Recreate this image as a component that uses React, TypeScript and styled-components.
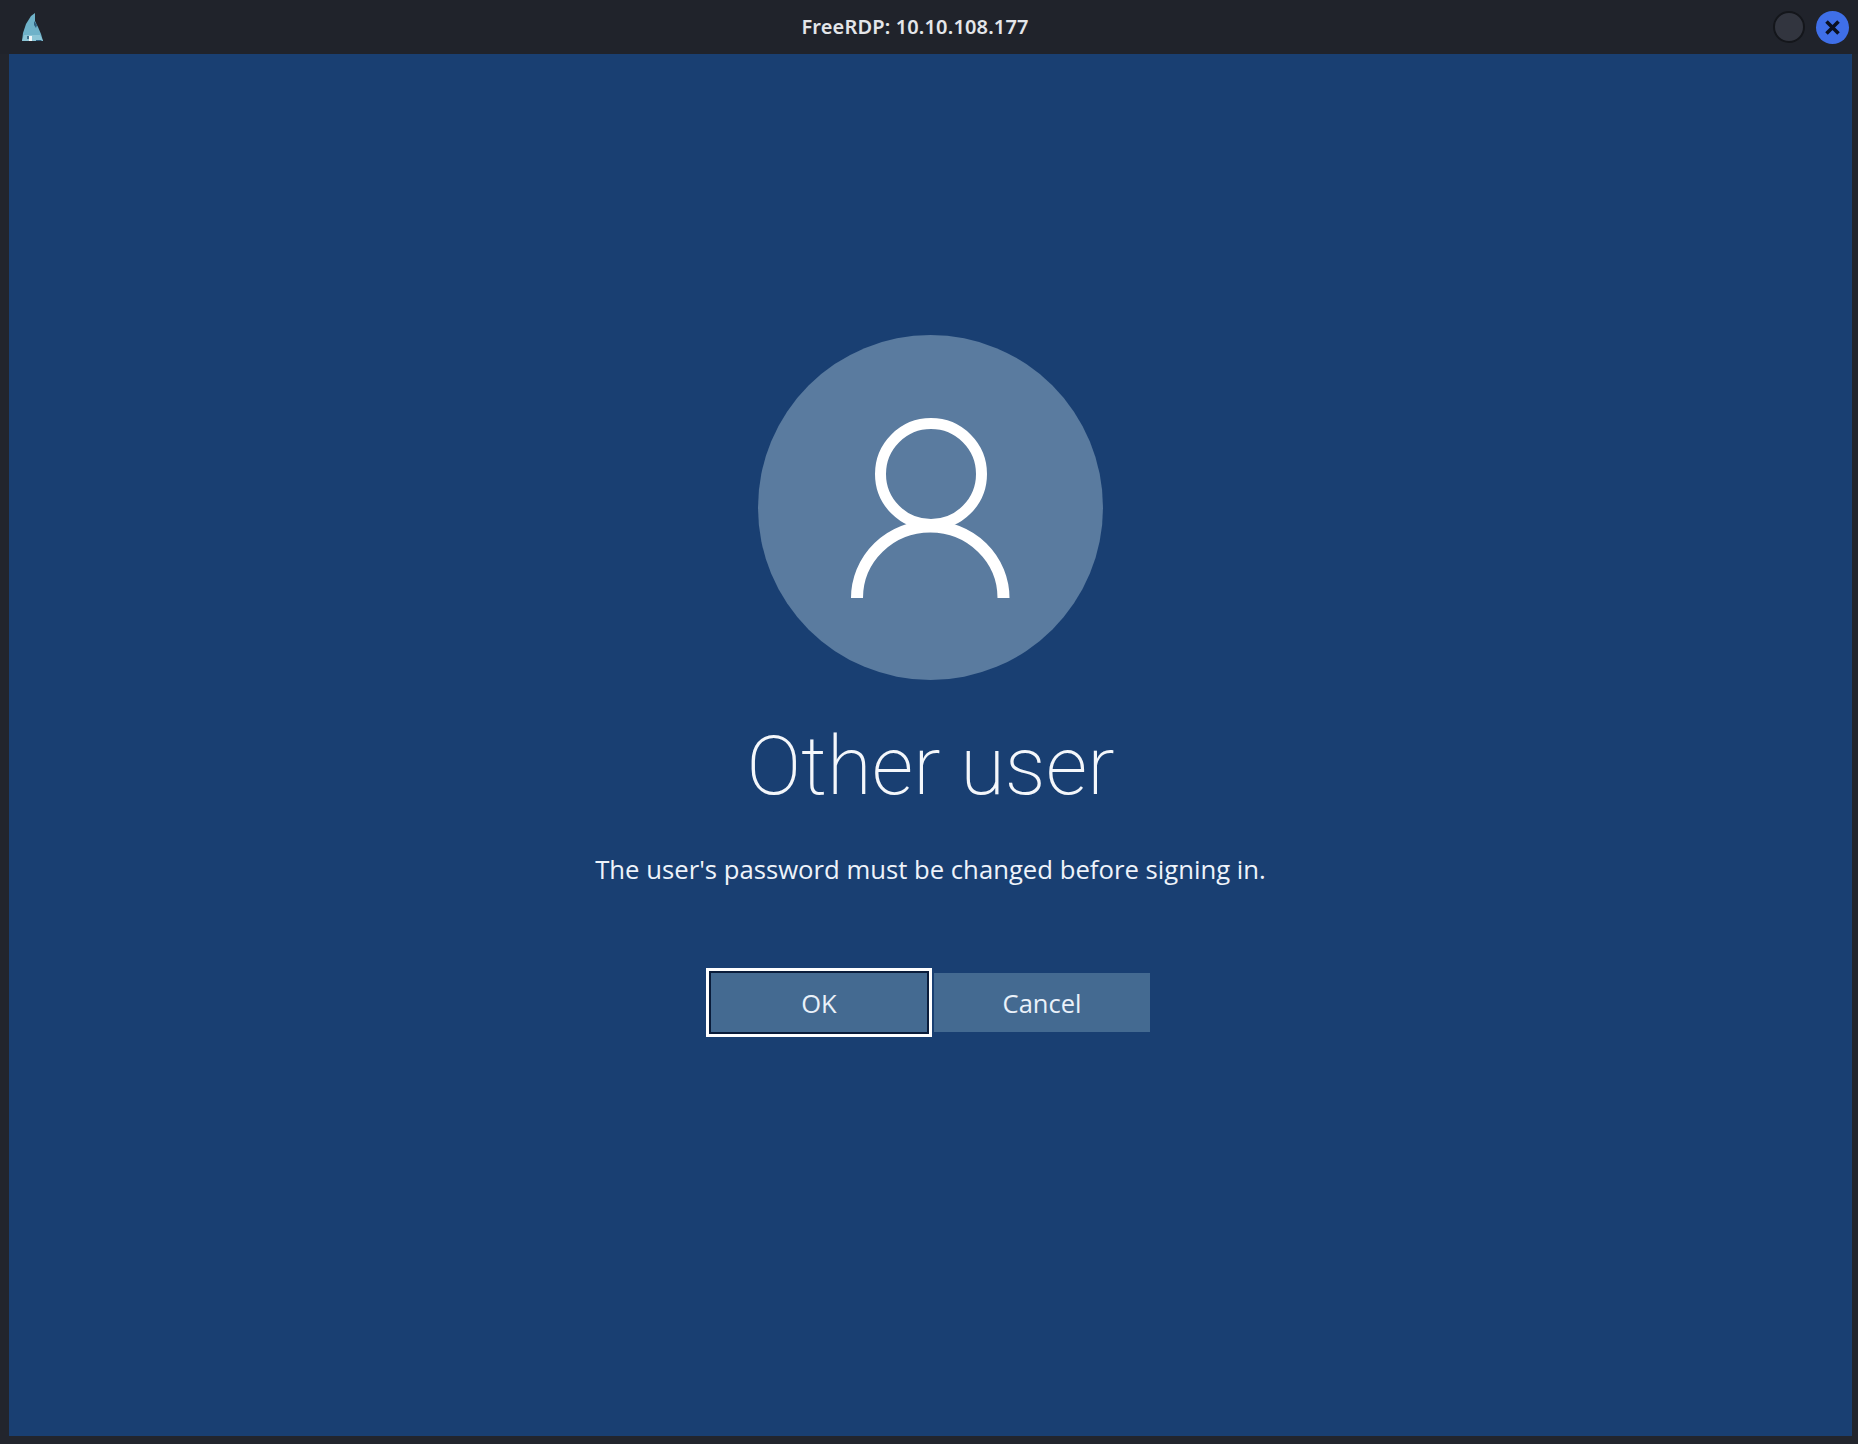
import React from 'react';
import styled, { createGlobalStyle } from 'styled-components';

const GlobalStyle = createGlobalStyle`
  html, body {
    margin: 0;
    padding: 0;
    background: #22252d;
  }
`

const Window = styled.div`
  width: 1858px;
  height: 1444px;
  display: flex;
  flex-direction: column;
  background: #22252d;
  font-family: "Open Sans", "Noto Sans", sans-serif;
  overflow: hidden;
`

const TitleBar = styled.div`
  height: 54px;
  flex: none;
  display: flex;
  align-items: center;
  justify-content: space-between;
  background: #20232b;
`

const AppIconSlot = styled.div`
  width: 35px;
  padding-left: 22px;
  display: flex;
  align-items: center;
`

const Title = styled.span`
  margin-bottom: 2px;
  font-family: "Noto Sans", sans-serif;
  font-size: 20px;
  letter-spacing: 0.15px;
  font-weight: 600;
  color: #e4e6ea;
  white-space: nowrap;
`

const WindowButtons = styled.div`
  width: 76px;
  padding-right: 9px;
  display: flex;
  align-items: center;
  gap: 11px;
`

const MinimizeButton = styled.div`
  width: 32px;
  height: 32px;
  box-sizing: border-box;
  border-radius: 50%;
  border: 2px solid #14161b;
  background: #32353f;
`

const CloseButton = styled.div`
  width: 33px;
  height: 33px;
  border-radius: 50%;
  background: #3f6fe8;
  display: flex;
  align-items: center;
  justify-content: center;
`

const Desktop = styled.div`
  flex: 1;
  margin: 0 6px 8px 9px;
  padding-top: 281px;
  display: flex;
  flex-direction: column;
  align-items: center;
  background: #193f72;
  color: #fff;
`

const Avatar = styled.div`
  width: 345px;
  height: 345px;
  flex: none;
  border-radius: 50%;
  background: #5a7b9f;
`

const UserName = styled.h1`
  margin: 30px 0 0;
  font-family: Roboto, "Open Sans", sans-serif;
  font-size: 81.5px;
  line-height: 112px;
  font-weight: 200;
  color: #f4f7fb;
`

const Message = styled.p`
  margin: 31px 0 0;
  font-size: 25.7px;
  line-height: 34px;
  color: #eef3fa;
`

const ButtonRow = styled.div`
  margin-top: 86px;
  display: flex;
  gap: 7px;
`

const ActionButton = styled.button<{ $focused?: boolean }>`
  width: 216px;
  height: 59px;
  padding: 0;
  border: none;
  background: #446a91;
  color: #eaf1f9;
  font-family: "Open Sans", "Noto Sans", sans-serif;
  font-size: 25.5px;
  ${p => p.$focused && `
    box-shadow: 0 0 0 2px #0a1c3a, 0 0 0 5px #fff;
  `}
`

function FreeRdpIcon() {
  return (
    <svg width="22" height="29" viewBox="0 0 22 29">
      <path d="M0 28 L1 20 L4 11 L9 3 L13 0 L13 8 L16 14 L19 21 L21 28 Z" fill="#6fb2c9" />
      <path d="M12 8 L15 12 L14 15 L12 12 Z" fill="#2f5f7e" />
      <path d="M2 22 L18 22 L21 28 L0 28 Z" fill="#8cc5d6" />
      <path d="M14 27 L19 27 L20 28 L14 28 Z" fill="#2f5f7e" />
      <rect x="7" y="23" width="3" height="5" fill="#f2f6f8" />
      <rect x="5" y="23" width="2" height="3" fill="#3f6f8a" />
    </svg>
  )
}

function CloseIcon() {
  return (
    <svg width="17" height="17" viewBox="0 0 17 17">
      <path d="M2.5 2.5 L14.5 14.5 M14.5 2.5 L2.5 14.5" stroke="#0b1020" strokeWidth="3.6" />
    </svg>
  )
}

function UserIcon() {
  return (
    <svg width="345" height="345" viewBox="0 0 345 345">
      <circle cx="173" cy="139" r="50.5" fill="none" stroke="#fff" strokeWidth="11" />
      <path d="M99 263 A73.25 71.5 0 0 1 245.5 263" fill="none" stroke="#fff" strokeWidth="12" />
    </svg>
  )
}

export default function App() {
  return (
    <Window>
      <GlobalStyle />
      <TitleBar>
        <AppIconSlot>
          <FreeRdpIcon />
        </AppIconSlot>
        <Title>FreeRDP: 10.10.108.177</Title>
        <WindowButtons>
          <MinimizeButton />
          <CloseButton>
            <CloseIcon />
          </CloseButton>
        </WindowButtons>
      </TitleBar>
      <Desktop>
        <Avatar>
          <UserIcon />
        </Avatar>
        <UserName>Other user</UserName>
        <Message>The user's password must be changed before signing in.</Message>
        <ButtonRow>
          <ActionButton $focused>OK</ActionButton>
          <ActionButton>Cancel</ActionButton>
        </ButtonRow>
      </Desktop>
    </Window>
  )
}
